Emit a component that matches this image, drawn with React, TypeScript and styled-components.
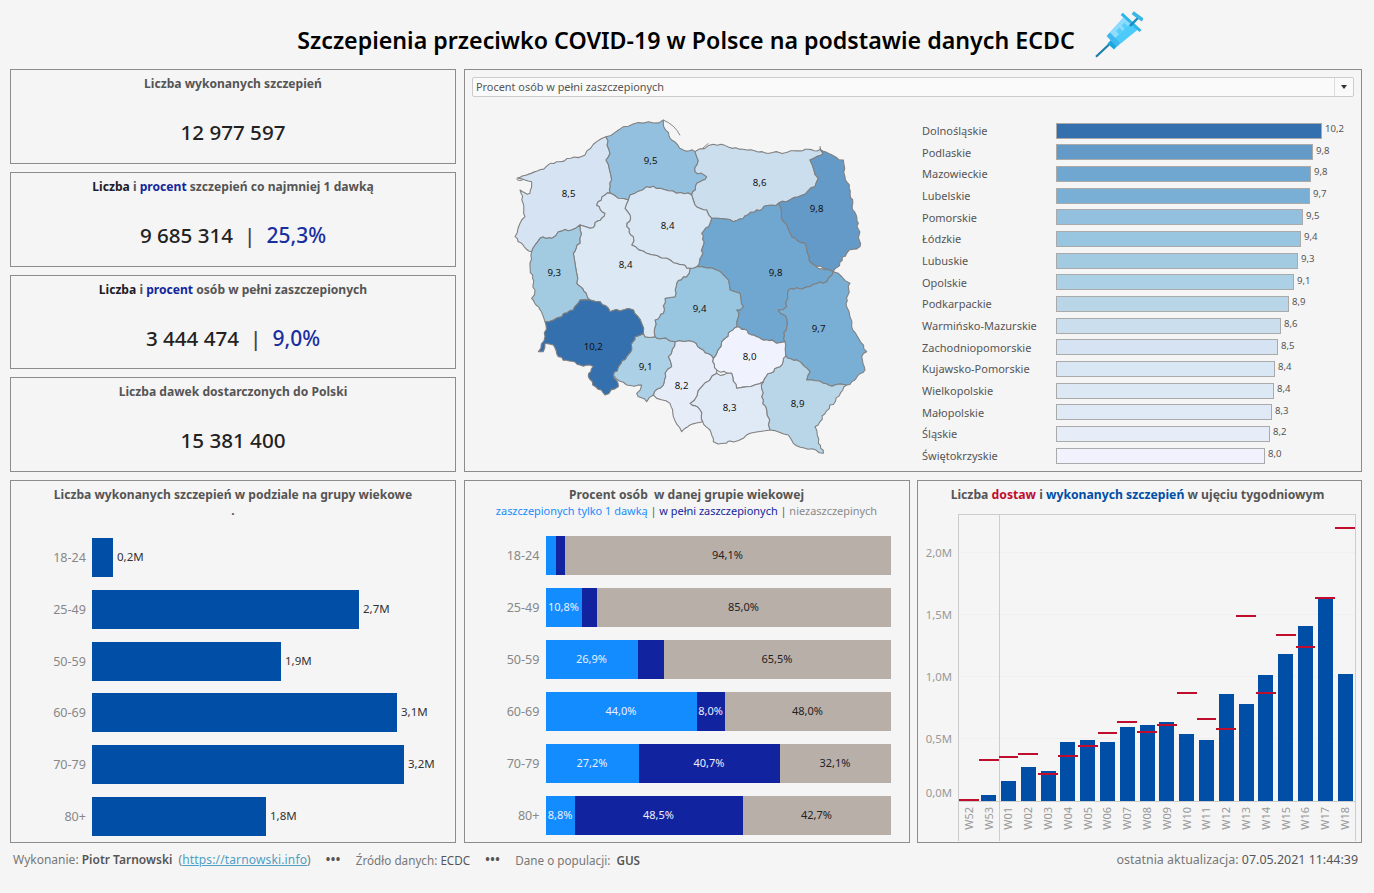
import React from "react";
import styled, { createGlobalStyle } from "styled-components";

const Font = `"Noto Sans", "Open Sans", sans-serif`;

const Global = createGlobalStyle`
  html, body { margin: 0; padding: 0; background: #f5f5f5; }
  body { font-family: ${Font}; }
`;

const Page = styled.div`
  width: 1374px;
  height: 893px;
  overflow: hidden;
  background: #f5f5f5;
  padding: 0 12px 0 10px;
  box-sizing: border-box;
  display: flex;
  flex-direction: column;
`;
const Header = styled.header`
  height: 69px;
  flex: none;
  display: flex;
  align-items: center;
  justify-content: center;
  gap: 20px;
  padding-left: 68px;
  color: #000;
`;
const Title = styled.h1`
  margin: 10px 0 0;
  font-size: 23.2px;
  line-height: 30px;
  font-weight: 600;
`;
const Top = styled.div`
  display: grid;
  grid-template-columns: 446px 898px;
  grid-template-rows: 403px;
  gap: 8px;
  flex: none;
`;
const Cards = styled.div`
  display: flex;
  flex-direction: column;
  gap: 8px;
  min-height: 0;
`;
const Panel = styled.section`
  border: 1px solid #8c8c8c;
  box-sizing: border-box;
  position: relative;
  min-height: 0;
`;
const Card = styled(Panel)`
  flex: 1;
  display: flex;
  flex-direction: column;
  align-items: center;
  padding-top: 5px;
`;
const CardTitle = styled.div`
  font-size: 12.1px;
  line-height: 18px;
  font-weight: 700;
  color: #555;
`;
const Dark = styled.span`color: #1c1c2a;`;
const Navy = styled.span`color: #14259c;`;
const CardValue = styled.div`
  margin-top: 24px;
  font-size: 20.6px;
  line-height: 30px;
  font-weight: 500;
  color: #222;
  display: flex;
  align-items: baseline;
  gap: 11px;
`;
const Percent = styled.span`color: #1a2ea0; font-size: 21px;`;
const Sep = styled.span`color: #444; font-weight: 500;`;

const MapPanel = styled(Panel)`
  padding: 7px;
  display: flex;
  flex-direction: column;
`;
const Select = styled.div`
  height: 20px;
  flex: none;
  box-sizing: border-box;
  border: 1px solid #ccc;
  border-radius: 2px;
  background: #fafafa;
  display: flex;
  align-items: center;
  justify-content: space-between;
  font-size: 10.9px;
  color: #555;
  padding-left: 3px;
`;
const SelectText = styled.span`
  margin-top: -2px;
`;
const Arrow = styled.span`
  width: 18px;
  height: 18px;
  border-left: 1px solid #ddd;
  display: flex;
  align-items: center;
  justify-content: center;
  &::after {
    content: "";
    border-left: 3.5px solid transparent;
    border-right: 3.5px solid transparent;
    border-top: 4px solid #333;
  }
`;
const MapRow = styled.div`
  display: flex;
  flex: 1;
  min-height: 0;
`;
const MapSvg = styled.svg`
  width: 400px;
  height: 350px;
  margin: 13px 0 0 18px;
  flex: none;
`;
const Regions = styled.div`
  margin: 22.7px 0 0 32px;
  display: flex;
  flex-direction: column;
`;
const RegionRow = styled.div`
  height: 21.68px;
  flex: none;
  display: flex;
  align-items: center;
`;
const RegionName = styled.div`
  width: 134px;
  font-size: 11px;
  color: #555;
  white-space: nowrap;
`;
const RegionBar = styled.div`
  height: 16px;
  box-sizing: border-box;
  border: 1px solid #aaa;
`;
const RegionValue = styled.span`
  font-size: 9.6px;
  color: #555;
  margin: -4px 0 0 3px;
`;

const Bottom = styled.div`
  margin-top: 8px;
  display: grid;
  grid-template-columns: 446px 446px 445px;
  grid-template-rows: 363px;
  gap: 8px 7.5px;
  flex: none;
`;
const ChartPanel = styled(Panel)`
  display: flex;
  flex-direction: column;
  align-items: center;
`;
const ChartTitle = styled.div`
  margin-top: 5px;
  font-size: 12.1px;
  line-height: 18px;
  font-weight: 700;
  color: #555;
  white-space: nowrap;
`;
const WeeklyTitle = styled(ChartTitle)`
  margin-right: 4px;
  font-size: 12.2px;
`;
const ChartSub = styled.div`
  margin-top: -1px;
  font-size: 10.95px;
  line-height: 15px;
  color: #8a8a8a;
  white-space: nowrap;
`;
const Light = styled.span`color: #1a8cff;`;
const Red = styled.span`color: #c00d2e;`;
const Blue = styled.span`color: #004ea6;`;
const Dot = styled.div`
  font-size: 12px;
  line-height: 14px;
  font-weight: 700;
  color: #555;
`;
const AgeRows = styled.div<{ $top: number; $gap: number }>`
  margin-top: ${(p) => p.$top}px;
  align-self: stretch;
  padding-left: 40px;
  display: flex;
  flex-direction: column;
  gap: ${(p) => p.$gap}px;
`;
const AgeRow = styled.div`
  height: 39px;
  flex: none;
  display: flex;
  align-items: center;
`;
const AgeLabel = styled.div`
  width: 35px;
  margin-right: 6px;
  text-align: right;
  font-size: 12.6px;
  color: #888;
  white-space: nowrap;
`;
const AgeBar = styled.div`
  height: 39px;
  background: #004ea6;
  flex: none;
`;
const AgeValue = styled.div`
  margin: -2px 0 0 4px;
  font-size: 11.5px;
  color: #333;
`;
const Stack = styled.div`
  width: 345px;
  height: 39px;
  display: flex;
`;
const Seg = styled.div<{ $bg: string; $fg: string }>`
  background: ${(p) => p.$bg};
  color: ${(p) => p.$fg};
  font-size: 11px;
  padding-bottom: 2px;
  box-sizing: border-box;
  display: flex;
  align-items: center;
  justify-content: center;
  white-space: nowrap;
  overflow: hidden;
  flex: none;
`;
const Weekly = styled.div`
  position: relative;
  margin: 10px 0 0 40px;
  width: 398px;
  height: 327px;
  box-sizing: border-box;
  border: 1px solid #ccc;
  border-bottom: none;
  align-self: flex-start;
  display: flex;
`;
const Tick = styled.div`
  position: absolute;
  right: 100%;
  margin-right: 7px;
  font-size: 11.3px;
  line-height: 14px;
  color: #999;
  white-space: nowrap;
`;
const GridLine = styled.div`
  position: absolute;
  left: 0;
  right: 0;
  height: 1px;
  background: #f0f0f0;
`;
const Week = styled.div<{ $sep: boolean }>`
  flex: 1;
  display: flex;
  flex-direction: column;
  box-shadow: ${(p) => (p.$sep ? "inset 1px 0 0 #ccc" : "none")};
  position: relative;
  min-width: 0;
`;
const WeekPlot = styled.div`
  height: 286px;
  flex: none;
  border-bottom: 1px solid #ccc;
  position: relative;
  display: flex;
  align-items: flex-end;
  justify-content: center;
`;
const WeekBar = styled.div`
  width: 15px;
  background: #004ea6;
`;
const Marker = styled.div`
  position: absolute;
  left: 0;
  right: 0;
  height: 2px;
  background: #c00d2e;
`;
const WeekLabel = styled.div`
  margin-top: 5px;
  align-self: center;
  writing-mode: vertical-rl;
  transform: rotate(180deg);
  font-size: 11px;
  line-height: 14px;
  color: #999;
`;
const Footer = styled.footer`
  flex: 1;
  display: flex;
  justify-content: space-between;
  padding: 8px 4px 0 3px;
  font-size: 12px;
  line-height: 18px;
  color: #777;
  white-space: nowrap;
`;
const FooterLeft = styled.div`
  display: flex;
  gap: 15px;
`;
const FooterPart = styled.span`
  font-size: 11.7px;
`;
const FooterRight = styled.span`
  font-size: 12.45px;
`;
const Strong = styled.b`color: #555; font-weight: 600;`;
const Mid = styled.span`color: #555;`;
const Link = styled.span`color: #4f9fc4; text-decoration: underline; letter-spacing: 0.15px;`;
const Dots = styled.span`color: #555; font-weight: 700; letter-spacing: 0.5px;`;

type P = [number, number];
const jagEdge = (a: P, b: P): P[] => {
  const swap = a[0] > b[0] || (a[0] === b[0] && a[1] > b[1]);
  const [s, e] = swap ? [b, a] : [a, b];
  const rec = (p: P, q: P): P[] => {
    const len = Math.hypot(q[0] - p[0], q[1] - p[1]);
    if (len < 16) return [];
    const h = Math.sin(p[0] * 12.9898 + p[1] * 78.233 + q[0] * 37.719 + q[1] * 11.13) * 43758.5453;
    const r = (h - Math.floor(h)) * 2 - 1;
    const amp = Math.min(len * 0.3, 4.5) * r;
    const m: P = [
      (p[0] + q[0]) / 2 + ((q[1] - p[1]) / len) * amp,
      (p[1] + q[1]) / 2 - ((q[0] - p[0]) / len) * amp,
    ];
    return [...rec(p, m), m, ...rec(m, q)];
  };
  const mid = rec(s, e);
  return swap ? mid.reverse() : mid;
};
const path = (pts: P[]) => {
  const out: P[] = [];
  pts.forEach((p, i) => {
    out.push(p, ...jagEdge(p, pts[(i + 1) % pts.length]));
  });
  return "M" + out.map((p) => `${p[0].toFixed(1)} ${p[1].toFixed(1)}`).join("L") + "Z";
};

const mapRegions: { v: string; c: string; x: number; y: number; pts: P[] }[] = [
  { v: "8,5", c: "#d5e3f2", x: 236, y: 250, pts: [[348,80],[360,130],[348,150],[365,210],[362,250],[345,255],[320,285],[345,310],[300,355],[270,345],[245,360],[205,365],[185,385],[150,385],[125,425],[75,380],[95,330],[105,320],[90,240],[120,250],[125,215],[85,205],[135,185],[200,155],[285,135],[320,95]] },
  { v: "9,5", c: "#93c0de", x: 482, y: 151, pts: [[348,80],[400,50],[520,30],[545,90],[580,120],[615,125],[620,140],[615,185],[650,200],[620,220],[605,255],[560,250],[510,235],[470,230],[420,255],[415,270],[385,265],[362,250],[365,210],[348,150],[360,130]] },
  { v: "8,6", c: "#cbdeee", x: 809, y: 217, pts: [[615,125],[670,103],[850,127],[990,118],[1000,130],[960,150],[985,205],[975,230],[890,275],[865,280],[800,300],[730,335],[680,325],[665,325],[650,300],[615,285],[605,255],[620,220],[650,200],[615,185],[620,140]] },
  { v: "9,8", c: "#649ac8", x: 980, y: 295, pts: [[990,110],[1015,130],[1060,150],[1065,200],[1105,340],[1110,410],[1070,430],[1030,485],[1000,475],[965,460],[950,420],[945,400],[905,380],[880,335],[865,280],[890,275],[975,230],[985,205],[960,150],[1000,130]] },
  { v: "9,8", c: "#6fa7d0", x: 857, y: 487, pts: [[730,335],[800,300],[865,280],[880,335],[905,380],[945,400],[950,420],[965,460],[1030,485],[1000,520],[960,530],[895,540],[890,590],[865,600],[890,625],[885,695],[860,700],[800,680],[740,650],[745,620],[740,600],[760,590],[750,550],[720,540],[715,510],[680,480],[620,470],[640,405],[635,370],[660,340],[665,325],[680,325]] },
  { v: "9,7", c: "#79afd5", x: 986, y: 655, pts: [[1030,485],[1080,520],[1070,590],[1085,650],[1130,725],[1115,740],[1125,780],[1070,825],[1000,820],[950,810],[960,785],[920,750],[887,738],[885,695],[890,625],[865,600],[890,590],[895,540],[960,530],[1000,520]] },
  { v: "8,9", c: "#b9d6e9", x: 923, y: 880, pts: [[887,738],[920,750],[960,785],[950,810],[1000,820],[1070,825],[975,950],[985,1000],[1000,1030],[910,1000],[895,975],[840,960],[830,900],[815,860],[820,815],[870,770]] },
  { v: "8,0", c: "#f0f3fd", x: 779, y: 739, pts: [[740,650],[800,680],[860,700],[885,695],[887,738],[870,770],[820,815],[770,830],[740,835],[725,790],[680,780],[670,745],[695,695]] },
  { v: "8,3", c: "#e0eaf6", x: 719, y: 892, pts: [[725,790],[740,835],[770,830],[820,815],[815,860],[830,900],[840,960],[780,970],[760,985],[700,1000],[670,995],[660,960],[638,935],[630,900],[600,880],[635,830],[680,790]] },
  { v: "8,2", c: "#e7edf8", x: 575, y: 826, pts: [[555,695],[610,695],[670,745],[680,780],[680,790],[635,830],[600,880],[630,900],[638,935],[600,945],[575,965],[550,920],[540,880],[490,855],[520,825],[525,790],[545,770],[535,740]] },
  { v: "9,1", c: "#acd0e5", x: 467, y: 769, pts: [[465,680],[495,680],[555,695],[535,740],[545,770],[525,790],[520,825],[490,855],[470,875],[440,850],[455,825],[410,825],[370,795],[410,740],[435,680],[460,670]] },
  { v: "9,4", c: "#98c5df", x: 629, y: 595, pts: [[600,475],[620,470],[680,480],[715,510],[720,540],[750,550],[760,590],[740,600],[745,620],[740,650],[695,695],[670,745],[610,695],[555,695],[495,680],[495,630],[520,610],[525,565],[555,560],[560,520],[590,500]] },
  { v: "8,4", c: "#d9e6f3", x: 533, y: 346, pts: [[420,255],[470,230],[510,235],[560,250],[605,255],[615,285],[650,300],[665,325],[660,340],[635,370],[640,405],[620,470],[600,475],[590,475],[560,460],[530,445],[470,430],[425,405],[430,380],[410,350],[420,315],[405,295],[415,270]] },
  { v: "8,4", c: "#dce8f4", x: 407, y: 463, pts: [[362,250],[385,265],[415,270],[405,295],[420,315],[410,350],[430,380],[425,405],[470,430],[530,445],[560,460],[590,475],[600,475],[590,500],[560,520],[555,560],[525,565],[520,610],[495,630],[495,680],[465,680],[460,670],[455,640],[430,600],[400,600],[360,605],[330,575],[300,570],[260,520],[260,490],[250,430],[270,400],[270,345],[300,355],[345,310],[320,285],[345,255]] },
  { v: "9,3", c: "#a2cbe2", x: 193, y: 487, pts: [[270,345],[270,400],[250,430],[260,490],[260,520],[300,570],[270,570],[250,600],[215,620],[165,635],[160,620],[125,565],[135,540],[120,470],[125,425],[150,385],[185,385],[205,365],[245,360]] },
  { v: "10,2", c: "#3570ae", x: 310, y: 709, pts: [[165,635],[215,620],[250,600],[270,570],[300,570],[330,575],[360,605],[400,600],[430,600],[455,640],[460,670],[435,680],[410,740],[370,795],[385,830],[345,855],[295,800],[310,770],[270,765],[205,740],[190,705],[165,700],[160,725],[145,725],[165,680]] },
];

const listData: [string, number, string, string][] = [
  ["Dolnośląskie", 266, "10,2", "#3570ae"],
  ["Podlaskie", 257, "9,8", "#649ac8"],
  ["Mazowieckie", 255, "9,8", "#6fa7d0"],
  ["Lubelskie", 254, "9,7", "#79afd5"],
  ["Pomorskie", 247, "9,5", "#93c0de"],
  ["Łódzkie", 245, "9,4", "#98c5df"],
  ["Lubuskie", 242, "9,3", "#a2cbe2"],
  ["Opolskie", 238, "9,1", "#acd0e5"],
  ["Podkarpackie", 233, "8,9", "#b9d6e9"],
  ["Warmińsko-Mazurskie", 225, "8,6", "#cbdeee"],
  ["Zachodniopomorskie", 222, "8,5", "#d5e3f2"],
  ["Kujawsko-Pomorskie", 219, "8,4", "#d9e6f3"],
  ["Wielkopolskie", 218, "8,4", "#dce8f4"],
  ["Małopolskie", 216, "8,3", "#e0eaf6"],
  ["Śląskie", 214, "8,2", "#e7edf8"],
  ["Świętokrzyskie", 209, "8,0", "#f0f3fd"],
];

const ages: [string, number, string][] = [
  ["18-24", 21, "0,2M"],
  ["25-49", 267, "2,7M"],
  ["50-59", 189, "1,9M"],
  ["60-69", 305, "3,1M"],
  ["70-79", 312, "3,2M"],
  ["80+", 174, "1,8M"],
];

const stacks: [string, number, string, number, string, string][] = [
  ["18-24", 10, "", 9, "", "94,1%"],
  ["25-49", 36, "10,8%", 15, "", "85,0%"],
  ["50-59", 92, "26,9%", 26, "", "65,5%"],
  ["60-69", 151, "44,0%", 28, "8,0%", "48,0%"],
  ["70-79", 93, "27,2%", 141, "40,7%", "32,1%"],
  ["80+", 29, "8,8%", 168, "48,5%", "42,7%"],
];

const weeks: [string, number, number][] = [
  ["W52", 0, 1], ["W53", 6, 41], ["W01", 20, 44], ["W02", 34, 47], ["W03", 30, 27],
  ["W04", 59, 45], ["W05", 61, 55], ["W06", 59, 68], ["W07", 74, 79], ["W08", 76, 69],
  ["W09", 79, 76], ["W10", 67, 108], ["W11", 61, 82], ["W12", 107, 72], ["W13", 97, 185],
  ["W14", 126, 108], ["W15", 147, 166], ["W16", 175, 154], ["W17", 203, 203], ["W18", 127, 273],
];
const ticks: [string, number][] = [
  ["2,0M", 248], ["1,5M", 186], ["1,0M", 124], ["0,5M", 62], ["0,0M", 8],
];

const Syringe = () => (
  <svg width="48" height="48" viewBox="0 0 48 48">
    <path d="M1 45.7 L14.3 33.3" stroke="#1d7fa8" strokeWidth="2.2" />
    <path d="M12.5 32.5 L18 27 L24.5 32.5 L19 38.5 Z" fill="#1ba6dd" />
    <path d="M11.7 25 L28.3 6.7 L43.3 18.3 L21.7 35.7 Z" fill="#4ccbfb" />
    <path d="M11.7 25 L28.3 6.7 L35.5 12.5 L17 30 Z" fill="#8fdcff" />
    <path d="M11.7 25 L15 21.5 L25 32 L21.7 35.7 Z" fill="#3fb8ee" />
    <path d="M21 20 L24.5 16.5 L28 20.5 L24.5 24 Z M26.5 14.5 L29.5 11.5 L33 15.5 L30 18.5 Z" fill="#56cffc" />
    <path d="M26.7 2.8 L45.5 20" stroke="#2db4e8" strokeWidth="3" />
    <path d="M35 15 L43.3 6.7" stroke="#178fbd" strokeWidth="2.4" />
    <path d="M37.7 1.7 L47.7 9" stroke="#3ab6e4" strokeWidth="3.6" />
  </svg>
);

export default function App() {
  return (
    <Page>
      <Global />
      <Header>
        <Title>Szczepienia przeciwko COVID-19 w Polsce na podstawie danych ECDC</Title>
        <Syringe />
      </Header>
      <Top>
        <Cards>
          <Card>
            <CardTitle>Liczba wykonanych szczepień</CardTitle>
            <CardValue>12 977 597</CardValue>
          </Card>
          <Card>
            <CardTitle><Dark>Liczba</Dark> i <Navy>procent</Navy> szczepień co najmniej 1 dawką</CardTitle>
            <CardValue>9 685 314 <Sep>|</Sep> <Percent>25,3%</Percent></CardValue>
          </Card>
          <Card>
            <CardTitle><Dark>Liczba</Dark> i <Navy>procent</Navy> osób w pełni zaszczepionych</CardTitle>
            <CardValue>3 444 474 <Sep>|</Sep> <Percent>9,0%</Percent></CardValue>
          </Card>
          <Card>
            <CardTitle>Liczba dawek dostarczonych do Polski</CardTitle>
            <CardValue>15 381 400</CardValue>
          </Card>
        </Cards>
        <MapPanel>
          <Select>
            <SelectText>Procent osób w pełni zaszczepionych</SelectText>
            <Arrow />
          </Select>
          <MapRow>
            <MapSvg viewBox="0 0 1200 1050">
              <path d="M520 30 Q555 45 570 76 M655 100 Q640 118 615 125 M135 185 L90 203 Q78 200 82 210 Q95 215 100 208" fill="none" stroke="#888" strokeWidth="3" />
              {mapRegions.map((r) => (
                <path key={r.x} d={path(r.pts)} fill={r.c} stroke="#7f7f7f" strokeWidth="3.2" strokeLinejoin="round" />
              ))}
              {mapRegions.map((r) => (
                <text key={r.x} x={r.x} y={r.y + 10} textAnchor="middle" fontSize="29" fill="#111" fontFamily={Font}>{r.v}</text>
              ))}
            </MapSvg>
            <Regions>
              {listData.map(([name, w, v, c]) => (
                <RegionRow key={name}>
                  <RegionName>{name}</RegionName>
                  <RegionBar style={{ width: w, background: c }} />
                  <RegionValue>{v}</RegionValue>
                </RegionRow>
              ))}
            </Regions>
          </MapRow>
        </MapPanel>
      </Top>
      <Bottom>
        <ChartPanel>
          <ChartTitle>Liczba wykonanych szczepień w podziale na grupy wiekowe</ChartTitle>
          <Dot>.</Dot>
          <AgeRows $top={20} $gap={12.8}>
            {ages.map(([a, w, v]) => (
              <AgeRow key={a}>
                <AgeLabel>{a}</AgeLabel>
                <AgeBar style={{ width: w }} />
                <AgeValue>{v}</AgeValue>
              </AgeRow>
            ))}
          </AgeRows>
        </ChartPanel>
        <ChartPanel>
          <ChartTitle>Procent osób&nbsp; w danej grupie wiekowej</ChartTitle>
          <ChartSub><Light>zaszczepionych tylko 1 dawką</Light> <Mid>|</Mid> <Navy>w pełni zaszczepionych</Navy> <Mid>|</Mid> niezaszczepinych</ChartSub>
          <AgeRows $top={18} $gap={13}>
            {stacks.map(([a, l, lt, n, nt, rest]) => (
              <AgeRow key={a}>
                <AgeLabel>{a}</AgeLabel>
                <Stack>
                  <Seg $bg="#128cff" $fg="#eef" style={{ width: l }}>{lt}</Seg>
                  <Seg $bg="#11239f" $fg="#eef" style={{ width: n }}>{nt}</Seg>
                  <Seg $bg="#b9afa9" $fg="#222" style={{ flex: 1 }}>{rest}</Seg>
                </Stack>
              </AgeRow>
            ))}
          </AgeRows>
        </ChartPanel>
        <ChartPanel>
          <WeeklyTitle><Mid>Liczba</Mid> <Red>dostaw</Red> i <Blue>wykonanych szczepień</Blue> w ujęciu tygodniowym</WeeklyTitle>
          <Weekly>
            {ticks.map(([t, b]) => (
              <React.Fragment key={t}>
                <Tick style={{ bottom: b + 33 }}>{t}</Tick>
                {t !== "0,0M" && <GridLine style={{ bottom: b + 40 }} />}
              </React.Fragment>
            ))}
            {weeks.map(([w, h, m]) => (
              <Week key={w} $sep={w === "W01"}>
                <WeekPlot>
                  <WeekBar style={{ height: h }} />
                  <Marker style={{ bottom: m - 1 }} />
                </WeekPlot>
                <WeekLabel>{w}</WeekLabel>
              </Week>
            ))}
          </Weekly>
        </ChartPanel>
      </Bottom>
      <Footer>
        <FooterLeft>
          <span>Wykonanie: <Strong>Piotr Tarnowski</Strong>&nbsp; (<Link>https://tarnowski.info</Link>)</span>
          <Dots>•••</Dots>
          <FooterPart>Źródło danych: <Mid>ECDC</Mid></FooterPart>
          <Dots>•••</Dots>
          <FooterPart>Dane o populacji:&nbsp; <Strong>GUS</Strong></FooterPart>
        </FooterLeft>
        <FooterRight>ostatnia aktualizacja: <Mid>07.05.2021 11:44:39</Mid></FooterRight>
      </Footer>
    </Page>
  );
}
